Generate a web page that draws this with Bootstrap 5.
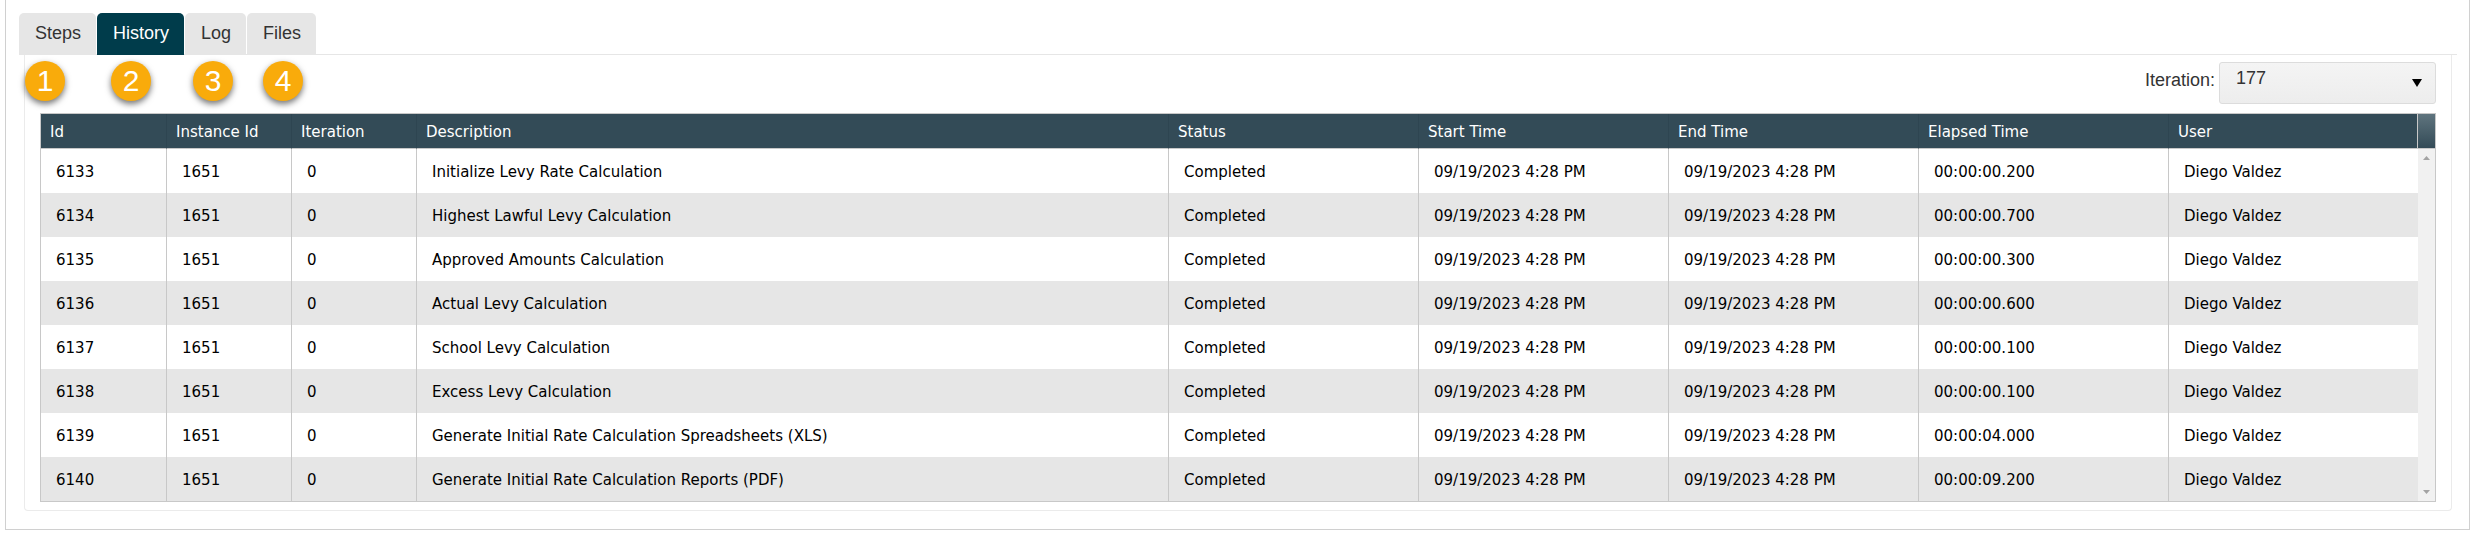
<!DOCTYPE html>
<html lang="en">
<head>
<meta charset="utf-8">
<meta name="viewport" content="width=device-width, initial-scale=1">
<title>Process History</title>
<link href="https://cdn.jsdelivr.net/npm/bootstrap@5.3.0/dist/css/bootstrap.min.css" rel="stylesheet">
<style>
  body { font-family: "Liberation Sans", Arial, sans-serif; font-size: 18px; line-height: 24px; color: #333; }
  .process-box { margin: 0 6px 0 5px; padding: 13px 12px 18px 13px; border: 1px solid #d0d0d0; border-top: 0; }

  .process-tabs { --bs-nav-tabs-border-color: #e6e6e6; gap: 1px; }
  .process-tabs .nav-link { margin: 0 0 -1px; padding: 8px 15px 10px 16px; border: 0; border-radius: 5px 5px 0 0; background: #e6e6e6; color: #333; }
  .process-tabs .nav-link.active { background: #003c4b; color: #fff; }

  .history-panel { margin: 0 5px; padding: 6px 15px 8px; border: 1px solid #ebebeb; border-top: 0; border-radius: 0 0 4px 4px; }
  .panel-tools { margin: 0 0 9px -15px; }

  .step-marks { display: grid; grid-template-columns: 86px 82px 70px 40px; }
  .step-mark { width: 40px; height: 40px; background: #f9ab0b; color: #fff; font-size: 30px; line-height: 40px; box-shadow: 0 3px 6px rgba(0, 0, 0, .55); }

  .iteration-tools { padding-top: 1px; }
  .iteration-label { padding-top: 6px; }
  .iteration-select { width: 217px; height: 42px; padding: 0 40px 9px 16px; border: 1px solid #dcdcdc; border-radius: 3px; font-size: 18px; color: #333;
    background: url("data:image/svg+xml,%3Csvg xmlns='http://www.w3.org/2000/svg' viewBox='0 0 10 8'%3E%3Cpath d='M0 0H10L5 8Z'/%3E%3C/svg%3E") right 13px center / 10px 8px no-repeat, linear-gradient(#f4f4f4, #ededed); }

  .history-grid { border: 1px solid #c8c8c8; font-family: "DejaVu Sans", Verdana, sans-serif; font-size: 15px; line-height: 20px; }
  .history-table { table-layout: fixed; border-collapse: separate; border-spacing: 0; --bs-table-color: #000; --bs-table-striped-color: #000; }
  .history-table th { height: 35px; padding: 8px 9px 6px; background: #334b57; color: #fff; font-weight: 400; border-right: 1px solid #2e4551; border-bottom: 1px solid #c8c8c8; white-space: nowrap; }
  .history-table th:last-child { border-right-color: #c8c8c8; }
  .history-table td { height: 44px; padding: 13px 15px 11px; border-right: 1px solid #c8c8c8; border-bottom: 0; white-space: nowrap; }
  .history-table td:last-child { border-right: 0; }
  .history-table tbody tr:nth-child(even) td { background: #e6e6e6; }
  .col-id { width: 126px; }
  .col-narrow { width: 125px; }
  .col-wide { width: 250px; }
  .col-user { width: 249px; }

  .scroll-strip { width: 17px; background: #f1f1f1; }
  .scroll-head { height: 35px; background: linear-gradient(#5f747e, #334b57); border-bottom: 1px solid #c8c8c8; }
  .scroll-arrow { display: block; width: 17px; height: 17px; fill: #a3a3a3; }
</style>
</head>
<body>
<main class="process-box">
  <ul class="nav nav-tabs process-tabs">
    <li class="nav-item"><a class="nav-link" href="#steps">Steps</a></li>
    <li class="nav-item"><a class="nav-link active" aria-current="page" href="#history">History</a></li>
    <li class="nav-item"><a class="nav-link" href="#log">Log</a></li>
    <li class="nav-item"><a class="nav-link" href="#files">Files</a></li>
  </ul>

  <section class="history-panel" id="history">
    <div class="panel-tools d-flex justify-content-between align-items-start">
      <div class="step-marks text-center">
        <span class="step-mark rounded-circle">1</span>
        <span class="step-mark rounded-circle">2</span>
        <span class="step-mark rounded-circle">3</span>
        <span class="step-mark rounded-circle">4</span>
      </div>
      <div class="iteration-tools d-flex align-items-start gap-1">
        <label class="iteration-label" for="iteration">Iteration:</label>
        <select class="form-select iteration-select" id="iteration"><option>177</option></select>
      </div>
    </div>

    <div class="history-grid d-flex">
      <div class="flex-fill">
        <table class="table history-table mb-0">
          <colgroup>
            <col class="col-id"><col class="col-narrow"><col class="col-narrow"><col>
            <col class="col-wide"><col class="col-wide"><col class="col-wide"><col class="col-wide"><col class="col-user">
          </colgroup>
          <thead>
            <tr><th scope="col">Id</th><th scope="col">Instance Id</th><th scope="col">Iteration</th><th scope="col">Description</th><th scope="col">Status</th><th scope="col">Start Time</th><th scope="col">End Time</th><th scope="col">Elapsed Time</th><th scope="col">User</th></tr>
          </thead>
          <tbody>
            <tr><td>6133</td><td>1651</td><td>0</td><td>Initialize Levy Rate Calculation</td><td>Completed</td><td>09/19/2023 4:28 PM</td><td>09/19/2023 4:28 PM</td><td>00:00:00.200</td><td>Diego Valdez</td></tr>
            <tr><td>6134</td><td>1651</td><td>0</td><td>Highest Lawful Levy Calculation</td><td>Completed</td><td>09/19/2023 4:28 PM</td><td>09/19/2023 4:28 PM</td><td>00:00:00.700</td><td>Diego Valdez</td></tr>
            <tr><td>6135</td><td>1651</td><td>0</td><td>Approved Amounts Calculation</td><td>Completed</td><td>09/19/2023 4:28 PM</td><td>09/19/2023 4:28 PM</td><td>00:00:00.300</td><td>Diego Valdez</td></tr>
            <tr><td>6136</td><td>1651</td><td>0</td><td>Actual Levy Calculation</td><td>Completed</td><td>09/19/2023 4:28 PM</td><td>09/19/2023 4:28 PM</td><td>00:00:00.600</td><td>Diego Valdez</td></tr>
            <tr><td>6137</td><td>1651</td><td>0</td><td>School Levy Calculation</td><td>Completed</td><td>09/19/2023 4:28 PM</td><td>09/19/2023 4:28 PM</td><td>00:00:00.100</td><td>Diego Valdez</td></tr>
            <tr><td>6138</td><td>1651</td><td>0</td><td>Excess Levy Calculation</td><td>Completed</td><td>09/19/2023 4:28 PM</td><td>09/19/2023 4:28 PM</td><td>00:00:00.100</td><td>Diego Valdez</td></tr>
            <tr><td>6139</td><td>1651</td><td>0</td><td>Generate Initial Rate Calculation Spreadsheets (XLS)</td><td>Completed</td><td>09/19/2023 4:28 PM</td><td>09/19/2023 4:28 PM</td><td>00:00:04.000</td><td>Diego Valdez</td></tr>
            <tr><td>6140</td><td>1651</td><td>0</td><td>Generate Initial Rate Calculation Reports (PDF)</td><td>Completed</td><td>09/19/2023 4:28 PM</td><td>09/19/2023 4:28 PM</td><td>00:00:09.200</td><td>Diego Valdez</td></tr>
          </tbody>
        </table>
      </div>
      <div class="scroll-strip d-flex flex-column flex-shrink-0" aria-hidden="true">
        <div class="scroll-head"></div>
        <svg class="scroll-arrow" viewBox="0 0 17 17"><path d="M5 11h7L8.500 7z"/></svg>
        <svg class="scroll-arrow mt-auto" viewBox="0 0 17 17"><path d="M5 6h7L8.500 10z"/></svg>
      </div>
    </div>
  </section>
</main>
<script src="https://cdn.jsdelivr.net/npm/bootstrap@5.3.0/dist/js/bootstrap.bundle.min.js"></script>
</body>
</html>
